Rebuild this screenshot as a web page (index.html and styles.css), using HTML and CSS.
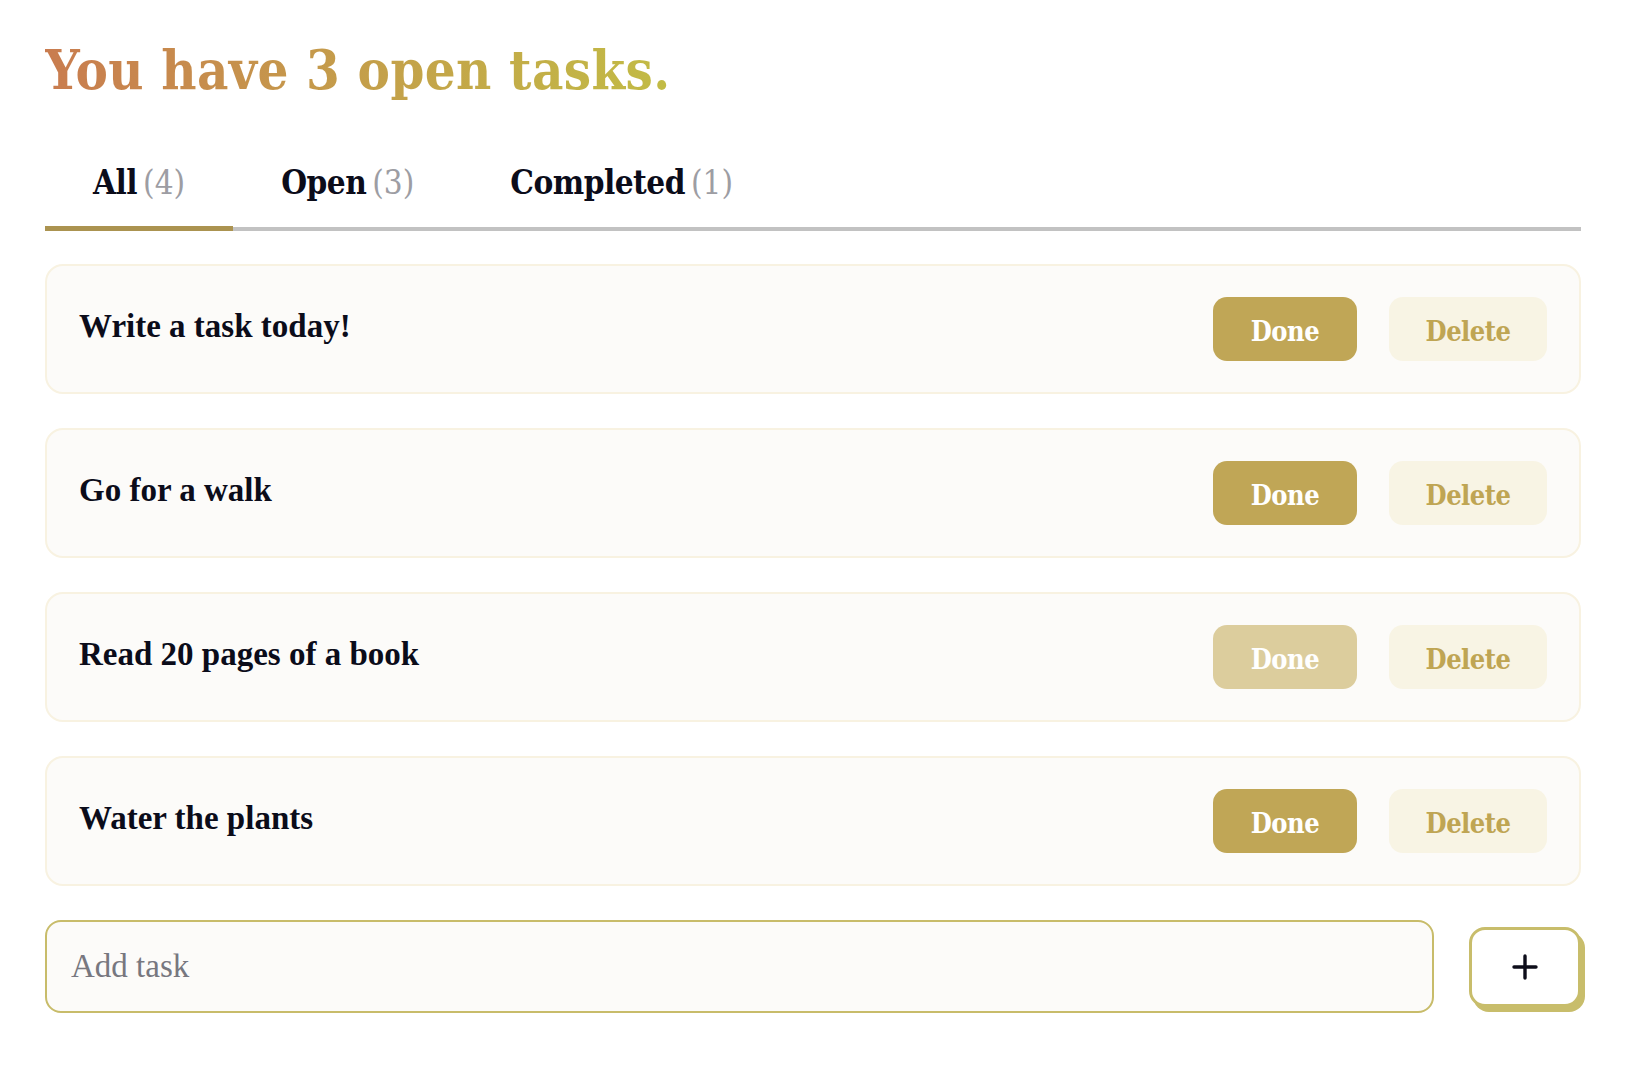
FILE: index.html
```html
<!DOCTYPE html>
<html lang="en">
<head>
<meta charset="utf-8">
<title>Tasks</title>
<link rel="stylesheet" href="styles.css">
</head>
<body>
<main class="app">
  <h1 class="title">You have 3 open tasks.</h1>
  <nav class="tabs">
    <button class="tab active"><span class="tab-name">All</span><span class="tab-count">(4)</span></button>
    <button class="tab"><span class="tab-name">Open</span><span class="tab-count">(3)</span></button>
    <button class="tab"><span class="tab-name">Completed</span><span class="tab-count">(1)</span></button>
  </nav>
  <ul class="tasks">
    <li class="task">
      <span class="task-text">Write a task today!</span>
      <div class="actions">
        <button class="btn btn-done">Done</button>
        <button class="btn btn-delete">Delete</button>
      </div>
    </li>
    <li class="task">
      <span class="task-text">Go for a walk</span>
      <div class="actions">
        <button class="btn btn-done">Done</button>
        <button class="btn btn-delete">Delete</button>
      </div>
    </li>
    <li class="task">
      <span class="task-text">Read 20 pages of a book</span>
      <div class="actions">
        <button class="btn btn-done is-completed">Done</button>
        <button class="btn btn-delete">Delete</button>
      </div>
    </li>
    <li class="task">
      <span class="task-text">Water the plants</span>
      <div class="actions">
        <button class="btn btn-done">Done</button>
        <button class="btn btn-delete">Delete</button>
      </div>
    </li>
  </ul>
  <form class="add-form">
    <input class="add-input" type="text" placeholder="Add task">
    <button class="add-btn" type="button" aria-label="Add">
      <svg width="28" height="28" viewBox="0 0 28 28"><path d="M14 3v22M3 14h22" stroke="#0d0d1a" stroke-width="3.4" stroke-linecap="round"/></svg>
    </button>
  </form>
</main>
</body>
</html>
```

FILE: styles.css
```css
* { box-sizing: border-box; }
html, body { margin: 0; padding: 0; background: #ffffff; }
body { font-family: "Liberation Serif", serif; color: #0b0c1a; }

.app {
  width: 1536px;
  margin-left: 45px;
  padding-top: 30px;
}

.title {
  margin: 0;
  font-family: "DejaVu Serif Condensed", "DejaVu Serif", serif;
  font-stretch: condensed;
  font-weight: 700;
  font-size: 54px;
  line-height: 80px;
  letter-spacing: 0.4px;
  background: linear-gradient(90deg, #c97c4f 0px, #c4a04a 330px, #c2bb45 620px, #c2bb45 100%);
  -webkit-background-clip: text;
  background-clip: text;
  color: transparent;
  display: inline-block;
}

.tabs {
  display: flex;
  margin-top: 53px;
  border-bottom: 4px solid #c2c2c2;
}
.tab {
  border: 0;
  background: none;
  padding: 0 48px 23px;
  margin-bottom: -4px;
  border-bottom: 5px solid transparent;
  font-family: "DejaVu Serif Condensed", "DejaVu Serif", serif;
  font-stretch: condensed;
  font-size: 33px;
  line-height: 40px;
  display: flex;
  gap: 6px;
  cursor: pointer;
}
.tab.active { border-bottom-color: #ab9350; }
.tab-name { font-weight: 700; color: #0b0c1a; letter-spacing: -0.5px; }
.tab-count { font-weight: 400; color: #9d9da3; }

.tasks {
  list-style: none;
  margin: 33px 0 0;
  padding: 0;
  display: flex;
  flex-direction: column;
  gap: 34px;
}
.task {
  display: flex;
  align-items: center;
  justify-content: space-between;
  padding: 31px 32px;
  background: #fcfbf9;
  border: 2px solid #f8f2e1;
  border-radius: 18px;
}
.task-text {
  font-family: "Liberation Serif", serif;
  font-weight: 700;
  font-size: 33px;
  margin-top: -6px;
}
.actions { display: flex; gap: 32px; }
.btn {
  height: 64px;
  border: 0;
  border-radius: 14px;
  font-family: "DejaVu Serif Condensed", "DejaVu Serif", serif;
  font-stretch: condensed;
  font-weight: 700;
  font-size: 27px;
  letter-spacing: -0.5px;
  padding: 4px 0 0;
  cursor: pointer;
}
.btn-done { width: 144px; background: #c0a656; color: #ffffff; }
.btn-done.is-completed { background: #dccd9d; }
.btn-delete { width: 158px; background: #f8f4e4; color: #bfa553; }

.add-form {
  display: flex;
  align-items: center;
  justify-content: space-between;
  margin-top: 34px;
}
.add-input {
  width: 1389px;
  height: 93px;
  border: 2px solid #c8bc6a;
  border-radius: 16px;
  background: #fcfbf9;
  padding: 0 24px;
  font-family: "Liberation Serif", serif;
  font-size: 33px;
  color: #0b0c1a;
  outline: none;
}
.add-input::placeholder { color: #77777f; }
.add-btn {
  width: 112px;
  height: 80px;
  margin-right: 0;
  background: #ffffff;
  border: 3px solid #c8bd6b;
  border-radius: 16px;
  box-shadow: 4px 5px 0 0 #c8bd6b;
  display: flex;
  align-items: center;
  justify-content: center;
  cursor: pointer;
}
```
